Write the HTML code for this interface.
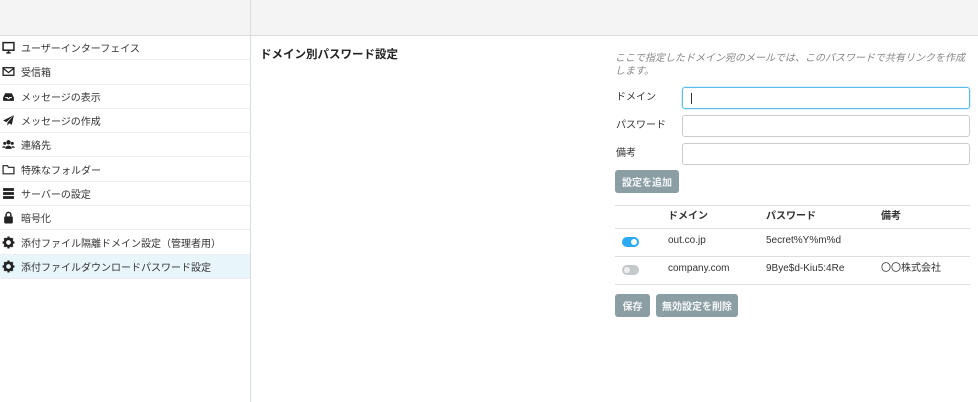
<!DOCTYPE html>
<html><head><meta charset="utf-8"><style>
*{box-sizing:border-box;margin:0;padding:0}
body{width:978px;height:402px;overflow:hidden;background:#fff;font-family:"Liberation Sans","Noto Sans CJK JP",sans-serif;font-size:10px;color:#333;position:relative}
.hdr{position:absolute;left:0;top:0;width:978px;height:36px;background:#f4f4f4;border-bottom:1px solid #ddd}
.hdr:after{content:"";position:absolute;left:250px;top:0;width:1px;height:36px;background:#ddd}
.side{position:absolute;left:0;top:36px;width:251px;height:366px;border-right:1px solid #d6dde0}
.item{height:24.3px;border-bottom:1px solid #eee;display:flex;align-items:center;padding-left:2px;font-size:10px;color:#333}
.item.act{background:#e8f5fb}
.item svg{width:13px;height:13px;margin-right:6px;flex:none}
.abs{position:absolute;line-height:13px}
.inp{position:absolute;left:682px;width:288px;height:22px;border:1px solid #ccc;border-radius:3px;background:#fff}
.btn{position:absolute;background:#8b9ea4;color:#f4f7f8;border-radius:3px;font-size:10px;font-weight:bold;display:flex;align-items:center;justify-content:center}
.hl{position:absolute;left:615px;width:355px;height:1px;background:#ddd}
.tog{position:absolute;left:622px;width:17px;height:10px;border-radius:5px}
.tog i{position:absolute;top:2px;width:6px;height:6px;border-radius:3px;background:#fff}
</style></head><body>
<div class="hdr"></div>
<div class="side">
<div class="item"><svg viewBox="0 0 12 12"><rect x="1" y="1.5" width="10" height="7" fill="none" stroke="#222" stroke-width="1.4"/><path d="M4 11h4M6 9v2" stroke="#222" stroke-width="1.4"/></svg>ユーザーインターフェイス</div>
<div class="item"><svg viewBox="0 0 12 12"><rect x="1" y="2.5" width="10" height="7" fill="none" stroke="#222" stroke-width="1.2"/><path d="M1 3l5 4 5-4" fill="none" stroke="#222" stroke-width="1.2"/></svg>受信箱</div>
<div class="item"><svg viewBox="0 0 12 12"><path d="M1 7l2-4h6l2 4v3H1z" fill="#222"/><path d="M3 7h2l.5 1h1l.5-1h2" stroke="#fff" fill="none"/></svg>メッセージの表示</div>
<div class="item"><svg viewBox="0 0 12 12"><path d="M11 1L1 6l3 1.5zM11 1L5 8v3l1.5-2.5L9 10z" fill="#222"/></svg>メッセージの作成</div>
<div class="item"><svg viewBox="0 0 12 12"><circle cx="6" cy="4" r="2" fill="#222"/><circle cx="2.5" cy="5" r="1.4" fill="#222"/><circle cx="9.5" cy="5" r="1.4" fill="#222"/><path d="M3 10a3 3 0 016 0zM0 9a2.5 2 0 013 -1.5V9zM12 9a2.5 2 0 00-3-1.5V9z" fill="#222"/></svg>連絡先</div>
<div class="item"><svg viewBox="0 0 12 12"><path d="M1 2.5h4l1 1.5h5v6H1z" fill="none" stroke="#222" stroke-width="1.1"/></svg>特殊なフォルダー</div>
<div class="item"><svg viewBox="0 0 12 12"><rect x="1" y="1" width="10" height="2.6" fill="#222"/><rect x="1" y="4.7" width="10" height="2.6" fill="#222"/><rect x="1" y="8.4" width="10" height="2.6" fill="#222"/></svg>サーバーの設定</div>
<div class="item"><svg viewBox="0 0 12 12"><rect x="2" y="5" width="8" height="6.5" rx="1" fill="#222"/><path d="M3.8 5V3.5a2.2 2.2 0 014.4 0V5" fill="none" stroke="#222" stroke-width="1.4"/></svg>暗号化</div>
<div class="item"><svg viewBox="0 0 12 12"><circle cx="6" cy="6" r="3.4" fill="none" stroke="#222" stroke-width="2.4"/><path d="M6 .5v2.5M6 9v2.5M.5 6H3M9 6h2.5M2.1 2.1l1.8 1.8M8.1 8.1l1.8 1.8M2.1 9.9l1.8-1.8M8.1 3.9l1.8-1.8" stroke="#222" stroke-width="2"/></svg>添付ファイル隔離ドメイン設定（管理者用）</div>
<div class="item act"><svg viewBox="0 0 12 12"><circle cx="6" cy="6" r="3.4" fill="none" stroke="#222" stroke-width="2.4"/><path d="M6 .5v2.5M6 9v2.5M.5 6H3M9 6h2.5M2.1 2.1l1.8 1.8M8.1 8.1l1.8 1.8M2.1 9.9l1.8-1.8M8.1 3.9l1.8-1.8" stroke="#222" stroke-width="2"/></svg>添付ファイルダウンロードパスワード設定</div>
</div>
<div class="abs" style="left:260px;top:49px;font-size:11.5px;font-weight:bold;color:#222">ドメイン別パスワード設定</div>
<div class="abs" style="left:615px;top:52px;width:358px;font-size:10px;font-style:italic;color:#888;line-height:13px">ここで指定したドメイン宛のメールでは、このパスワードで共有リンクを作成します。</div>
<div class="abs" style="left:616px;top:91px">ドメイン</div>
<div class="abs" style="left:616px;top:119px">パスワード</div>
<div class="abs" style="left:616px;top:147px">備考</div>
<div class="inp" style="top:87px;border-color:#5bbcea;box-shadow:0 0 2px #9bd8f5"><div style="position:absolute;left:8px;top:5px;width:1px;height:11px;background:#333"></div></div>
<div class="inp" style="top:115px"></div>
<div class="inp" style="top:143px"></div>
<div class="btn" style="left:615px;top:170px;width:64px;height:23px">設定を追加</div>
<div class="hl" style="top:205px"></div>
<div class="abs" style="left:668px;top:210px;font-weight:bold">ドメイン</div>
<div class="abs" style="left:766px;top:210px;font-weight:bold">パスワード</div>
<div class="abs" style="left:881px;top:210px;font-weight:bold">備考</div>
<div class="hl" style="top:228px"></div>
<div class="tog" style="top:237px;background:#2aa8f2"><i style="left:9px"></i></div>
<div class="abs" style="left:668px;top:234px">out.co.jp</div>
<div class="abs" style="left:766px;top:234px">5ecret%Y%m%d</div>
<div class="hl" style="top:256px"></div>
<div class="tog" style="top:265px;background:#c4c9cc"><i style="left:2px;background:#eee"></i></div>
<div class="abs" style="left:668px;top:262px">company.com</div>
<div class="abs" style="left:766px;top:262px">9Bye$d-Kiu5:4Re</div>
<div class="abs" style="left:881px;top:262px">〇〇株式会社</div>
<div class="hl" style="top:284px"></div>
<div class="btn" style="left:615px;top:294px;width:35px;height:23px">保存</div>
<div class="btn" style="left:656px;top:294px;width:82px;height:23px">無効設定を削除</div>
</body></html>
